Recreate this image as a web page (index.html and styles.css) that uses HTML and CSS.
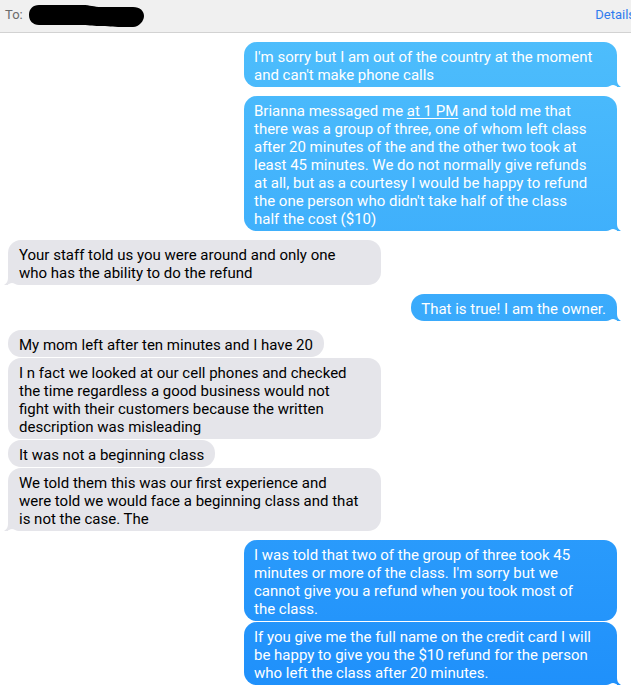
FILE: index.html
```html
<!DOCTYPE html>
<html lang="en">
<head>
<meta charset="utf-8">
<meta name="viewport" content="width=device-width, initial-scale=1">
<title>Messages</title>
<link rel="stylesheet" href="styles.css">
</head>
<body>
<header class="bar">
  <span class="to">To:</span>
  <svg class="redacted" width="115" height="23" viewBox="0 0 116 23" aria-hidden="true">
    <path d="M10 0H54C62 0 65 2 73 2H105C112 2 116 6 116 11S111 22 105 22H93C84 22 80 21 71 21C63 21 60 20 52 20H10C4 20 0 16 0 10S4 0 10 0Z"/>
  </svg>
  <a class="details" href="#details">Details</a>
</header>
<main class="thread">
  <section class="group sent">
    <p class="bubble wide tail">I'm sorry but I am out of the country at the moment<br>and can't make phone calls</p>
  </section>
  <section class="group sent">
    <p class="bubble wide tail">Brianna messaged me <a href="#time">at 1 PM</a> and told me that<br>there was a group of three, one of whom left class<br>after 20 minutes of the and the other two took at<br>least 45 minutes. We do not normally give refunds<br>at all, but as a courtesy I would be happy to refund<br>the one person who didn't take half of the class<br>half the cost ($10)</p>
  </section>
  <section class="group received">
    <p class="bubble wide tail">Your staff told us you were around and only one<br>who has the ability to do the refund</p>
  </section>
  <section class="group sent">
    <p class="bubble tail">That is true! I am the owner.</p>
  </section>
  <section class="group received">
    <p class="bubble">My mom left after ten minutes and I have 20</p>
    <p class="bubble wide">I n fact we looked at our cell phones and checked<br>the time regardless a good business would not<br>fight with their customers because the written<br>description was misleading</p>
    <p class="bubble">It was not a beginning class</p>
    <p class="bubble wide tail">We told them this was our first experience and<br>were told we would face a beginning class and that<br>is not the case. The</p>
  </section>
  <section class="group sent">
    <p class="bubble wide">I was told that two of the group of three took 45<br>minutes or more of the class. I'm sorry but we<br>cannot give you a refund when you took most of<br>the class.</p>
    <p class="bubble wide tail">If you give me the full name on the credit card I will<br>be happy to give you the $10 refund for the person<br>who left the class after 20 minutes.</p>
  </section>
</main>
</body>
</html>
```
FILE: styles.css
```css
* {
  box-sizing: border-box;
}

body {
  margin: 0;
  background: #fff;
  color: #000;
  font-family: Roboto, "Liberation Sans", sans-serif;
  font-size: 15px;
  line-height: 18px;
  overflow-x: hidden;
}

.bar {
  display: flex;
  align-items: center;
  gap: 6px;
  height: 33px;
  padding-left: 5px;
  background: #f0f0f0;
  border-bottom: 1px solid #d2d2d2;
  font-size: 13px;
  white-space: nowrap;
  overflow: hidden;
}

.to {
  color: #6b6b6b;
  padding-bottom: 2px;
}

.details {
  margin: 0 -4px 0 auto;
  padding-bottom: 2px;
  color: #2f7cee;
  text-decoration: none;
}

.thread {
  display: flex;
  flex-direction: column;
  gap: 9px;
  padding: 9px 14px 5px 8px;
}

.group {
  display: flex;
  flex-direction: column;
  gap: 1px;
}

.received {
  align-items: flex-start;
}

.sent {
  align-items: flex-end;
}

.bubble {
  position: relative;
  margin: 0;
  padding: 6px 11px 3px;
  border-radius: 13px;
  white-space: nowrap;
}

.wide {
  width: 61.25%;
}

.received .bubble {
  background: #e5e5ea;
}

.sent .bubble {
  padding-left: 10px;
  color: #fff;
  background: linear-gradient(#50c0fc, #1f90fb) fixed;
}

.bubble a {
  color: inherit;
  text-underline-offset: 2px;
}

.sent .tail {
  border-bottom-right-radius: 0;
}

.received .tail {
  border-bottom-left-radius: 0;
}

/* Tail flare beside the bubble, and the shallow notch under it */
.tail::before,
.tail::after {
  content: "";
  position: absolute;
  bottom: 0;
}

.tail::after {
  width: 4px;
  height: 7px;
  background: inherit;
}

.tail::before {
  width: 12px;
  height: 2px;
  background: #fff;
}

.sent .tail::after {
  left: 100%;
  clip-path: path("M0 0C0 3 1 5 4 7L0 7Z");
}

.sent .tail::before {
  right: -1px;
  clip-path: path("M0 2C3 2 5 0 7 0S10 1 12 2Z");
}

.received .tail::after {
  right: 100%;
  clip-path: path("M4 0C4 3 3 5 0 7L4 7Z");
}

.received .tail::before {
  left: -1px;
  clip-path: path("M12 2C9 2 7 0 5 0S2 1 0 2Z");
}
```
